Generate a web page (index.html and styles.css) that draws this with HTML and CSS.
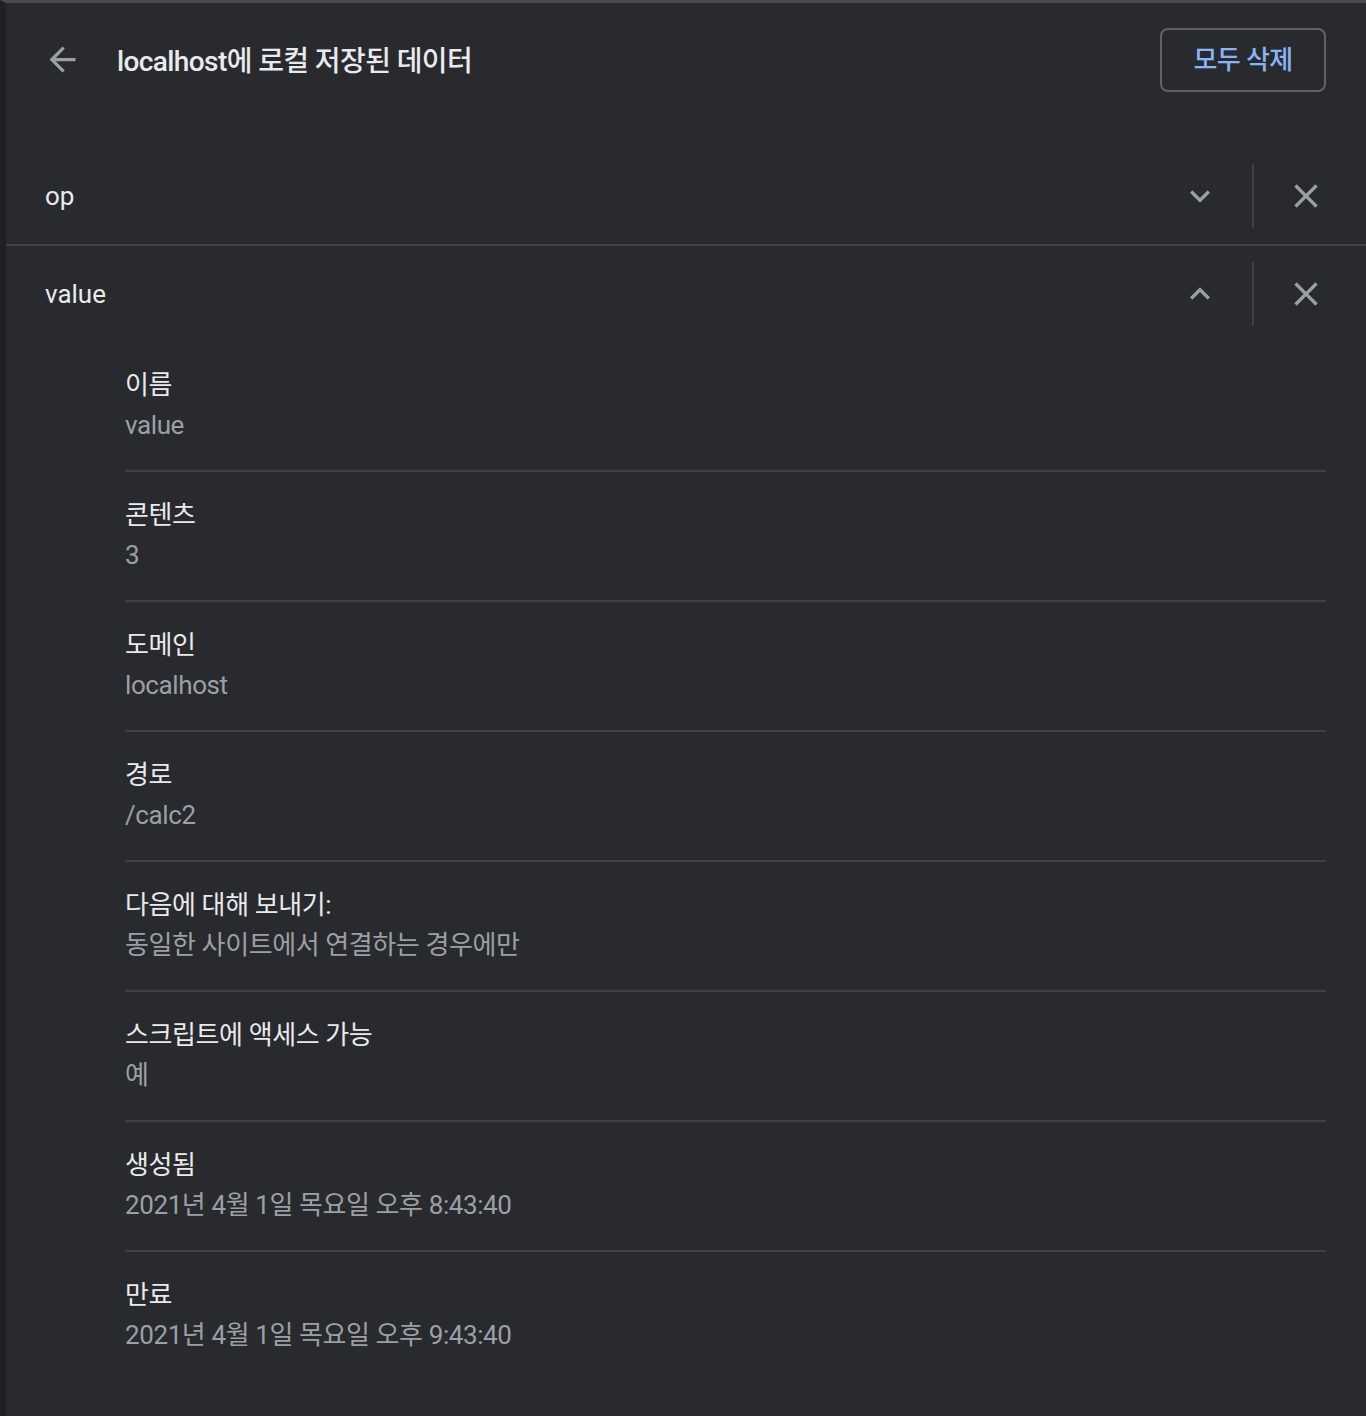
FILE: index.html
```html
<!DOCTYPE html>
<html lang="ko">
<head>
  <meta charset="UTF-8">
  <meta name="viewport" content="width=device-width, initial-scale=1.0">
  <title>localhost에 로컬 저장된 데이터</title>
  <link rel="stylesheet" href="styles.css">
</head>
<body>
  <div class="page">
    <div class="header">
      <button class="icon-button back-button" aria-label="뒤로">
        <svg viewBox="0 0 24 24"><path d="M20 11H7.83l5.59-5.59L12 4l-8 8 8 8 1.41-1.41L7.83 13H20v-2z"/></svg>
      </button>
      <h1 class="title">localhost에 로컬 저장된 데이터</h1>
      <button class="remove-all">모두 삭제</button>
    </div>

    <div class="cookie-row">
      <span class="cookie-name">op</span>
      <button class="icon-button" aria-label="펼치기">
        <svg viewBox="0 0 24 24"><path d="M16.59 8.59L12 13.17 7.41 8.59 6 10l6 6 6-6z"/></svg>
      </button>
      <span class="separator"></span>
      <button class="icon-button" aria-label="삭제">
        <svg viewBox="0 0 24 24"><path d="M19 6.41L17.59 5 12 10.59 6.41 5 5 6.41 10.59 12 5 17.59 6.41 19 12 13.41 17.59 19 19 17.59 13.41 12z"/></svg>
      </button>
    </div>

    <div class="cookie-row expanded">
      <span class="cookie-name">value</span>
      <button class="icon-button" aria-label="접기">
        <svg viewBox="0 0 24 24"><path d="M12 8l-6 6 1.41 1.41L12 10.83l4.59 4.58L18 14z"/></svg>
      </button>
      <span class="separator"></span>
      <button class="icon-button" aria-label="삭제">
        <svg viewBox="0 0 24 24"><path d="M19 6.41L17.59 5 12 10.59 6.41 5 5 6.41 10.59 12 5 17.59 6.41 19 12 13.41 17.59 19 19 17.59 13.41 12z"/></svg>
      </button>
    </div>

    <div class="details">
      <div class="detail">
        <div class="label">이름</div>
        <div class="value">value</div>
      </div>
      <div class="detail">
        <div class="label">콘텐츠</div>
        <div class="value">3</div>
      </div>
      <div class="detail">
        <div class="label">도메인</div>
        <div class="value">localhost</div>
      </div>
      <div class="detail">
        <div class="label">경로</div>
        <div class="value">/calc2</div>
      </div>
      <div class="detail">
        <div class="label">다음에 대해 보내기:</div>
        <div class="value">동일한 사이트에서 연결하는 경우에만</div>
      </div>
      <div class="detail">
        <div class="label">스크립트에 액세스 가능</div>
        <div class="value">예</div>
      </div>
      <div class="detail">
        <div class="label">생성됨</div>
        <div class="value">2021년 4월 1일 목요일 오후 8:43:40</div>
      </div>
      <div class="detail">
        <div class="label">만료</div>
        <div class="value">2021년 4월 1일 목요일 오후 9:43:40</div>
      </div>
    </div>
  </div>
</body>
</html>
```

FILE: styles.css
```css
body {
  margin: 0;
  background-color: #292a2d;
  font-family: Roboto, "Noto Sans CJK KR", sans-serif;
  color: #e8eaed;
}
.page {
  min-height: 1413px;
  border-top: 3px solid #4a4b4e;
  border-left: 6px solid #202124;
}
.header {
  display: flex;
  align-items: center;
  height: 112px;
  padding: 0 40px 0 36px;
  margin-bottom: 33px;
}
.icon-button {
  display: flex;
  align-items: center;
  justify-content: center;
  width: 40px;
  height: 40px;
  padding: 0;
  border: none;
  background: none;
  cursor: pointer;
}
.icon-button svg {
  width: 40px;
  height: 40px;
  fill: #9aa0a6;
}
.back-button svg {
  width: 39px;
  height: 39px;
}
.title {
  flex: 1;
  margin: 0 0 0 35px;
  font-size: 28px;
  font-weight: 500;
  letter-spacing: -0.6px;
  color: #e8eaed;
}
.remove-all {
  width: 166px;
  height: 64px;
  margin-top: 1px;
  padding: 0 0 5px;
  border: 2px solid #5f6368;
  border-radius: 8px;
  background: none;
  color: #8ab4f8;
  font-family: inherit;
  font-size: 26px;
  font-weight: 500;
  letter-spacing: -0.6px;
  cursor: pointer;
}
.cookie-row {
  display: flex;
  align-items: center;
  height: 96px;
  padding: 0 40px 0 39px;
  border-bottom: 2px solid #3f4042;
}
.cookie-row.expanded {
  border-bottom: none;
}
.cookie-name {
  flex: 1;
  font-size: 26px;
}
.separator {
  width: 2px;
  height: 64px;
  margin: 0 32px;
  background-color: #3f4042;
}
.details {
  margin: 0 40px 0 119px;
}
.detail {
  padding: 25px 0 27px;
  border-bottom: 2px solid #3f4042;
  font-size: 26px;
  letter-spacing: -0.4px;
}
.detail:last-child {
  border-bottom: none;
}
.label {
  line-height: 36px;
  color: #e8eaed;
}
.value {
  margin-top: 4px;
  line-height: 36px;
  color: #9aa0a6;
}
```
